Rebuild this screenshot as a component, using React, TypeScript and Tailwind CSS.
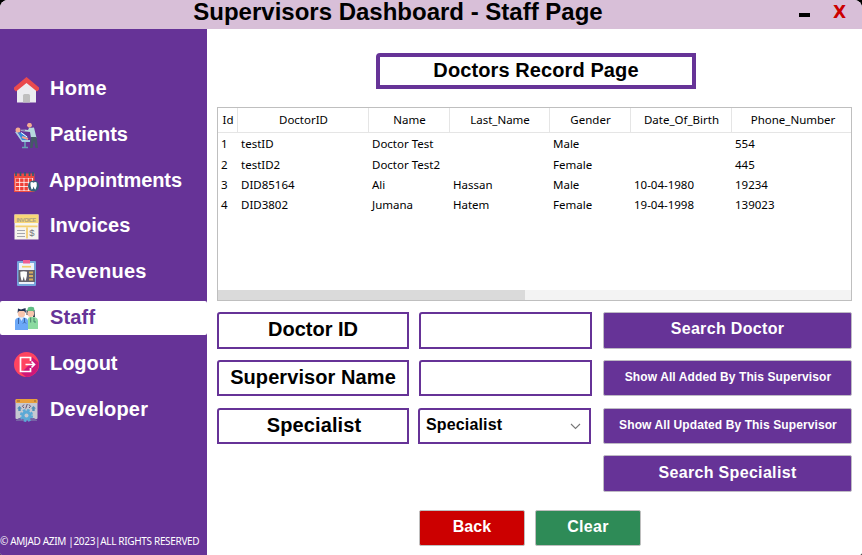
import React from "react";

const icons: Record<string, React.ReactNode> = {
  Home: (
    <>
      <path d="M3 10L12.5 3L22 10V25.5H3Z" fill="#ececf0" />
      <path d="M9 25.5V18.5Q9 17 10.5 17H14.5Q16 17 16 18.5V25.5Z" fill="#bfbfbf" />
      <path d="M12.5 0L25 10.5V12.5L23 14.5L12.5 6L2 14.5L0 12.5V10.5Z" fill="#ea4a4d" />
    </>
  ),
  Patients: (
    <>
      <path d="M1 9L3 8.500L9 17H16V19H8Z" fill="#a6cce4" />
      <path d="M4 9L9 10L14 14L12 17H8Z" fill="#3687dc" />
      <path d="M7 9.500L13 14" stroke="#fff" strokeWidth="1" />
      <path d="M8 14L14 16" stroke="#f4a28d" strokeWidth="2" />
      <path d="M11 19V24M8 24.500H14" stroke="#68a0b4" strokeWidth="1.600" />
      <circle cx="4" cy="7" r="2.500" fill="#f5ad93" />
      <circle cx="15.500" cy="2.300" r="2.400" fill="#f5ad93" />
      <path d="M7 6L14 7L15 5L20 4.500L22.500 15H17L16 9L7 8Z" fill="#b6d9dd" />
      <path d="M6.500 6.500L11 7" stroke="#7a55a5" strokeWidth="1.500" />
      <path d="M17 14H22.500L24 25H21.500L20 17L18.500 25H16Z" fill="#445a67" />
    </>
  ),
  Appointments: (
    <>
      <rect x="0" y="4.500" width="20.500" height="18.500" fill="#ef4b40" />
      <path d="M2 3V7M6.500 3V7M11 3V7M15.500 3V7M19 3V7" stroke="#315c75" strokeWidth="1.700" />
      <rect x="1.500" y="9" width="17.500" height="13" fill="#fff" />
      {[1.8, 6.1, 10.4, 14.7].map((x) =>
        [9.4, 13.7, 18].map((y) => (
          <rect key={x + "-" + y} x={x} y={y} width="3.500" height="3.500" fill="#ee4037" />
        )),
      )}
      <circle cx="19.500" cy="17" r="5.500" fill="#336078" />
      <path d="M16.500 13.500Q18 12.500 19.500 13.700Q21 12.500 22.700 13.500Q23.400 16 21.500 20.500Q20.300 20.500 19.600 17.500Q19 20.500 17.600 20.500Q16 16 16.500 13.500Z" fill="#fff" />
    </>
  ),
  Invoices: (
    <>
      <rect x=".5" y=".5" width="24" height="25" fill="#f6f4ee" />
      <rect x=".5" y=".5" width="24" height="8.500" fill="#f9d778" />
      <path d="M1.500 12.300H23.500M13 13.500V24.500" stroke="#f5cf6f" strokeWidth="1.800" />
      <path d="M3 16.500H11M3 19.500H11M3 22.500H11" stroke="#a5a7ae" strokeWidth="1" />
      <text x="2.600" y="7.500" fontSize="5.500" textLength="19.500" fontFamily="Liberation Sans" fontWeight="700" fill="#a9a083">INVOICE</text>
      <text x="15.200" y="22.200" fontSize="9.500" fontFamily="Liberation Sans" fontWeight="400" fill="#72757b">$</text>
    </>
  ),
  Revenues: (
    <>
      <rect x="3" y="1" width="19" height="25" rx="1" fill="#75a5dc" />
      <rect x="5" y="3" width="15" height="21" fill="#eef2fa" />
      <path d="M9 0H16V3.500H9Z" fill="#ef5e93" />
      <path d="M8 6.700H17" stroke="#f3cc67" strokeWidth="1.700" />
      <rect x="4.500" y="10" width="16.500" height="12" fill="#65616c" />
      <path d="M6.300 11.800Q9.700 10.500 13 11.800Q13.300 16 11.800 20.500H10.700L9.800 16.500L8.700 20.500H7.500Q6 15 6.300 11.800Z" fill="#fff" />
      <path d="M15 12.500H19M15 16H19M15 19.500H19" stroke="#d7ac60" strokeWidth="1.800" />
    </>
  ),
  Staff: (
    <>
      <path d="M1 24V15Q1 12 5 11.500H10Q14 12 14 15V24Z" fill="#6ba8f7" />
      <path d="M14 23V13Q14 11.500 16 11H20Q24 11.500 24 15V23Z" fill="#8bdaa0" />
      <circle cx="7.500" cy="7.700" r="3.700" fill="#f8c6ae" />
      <path d="M3.500 7L4 2.500L7 3.500L11.500 2L12 7L10 5L5 5Z" fill="#223253" />
      <path d="M5.500 11.500L7.500 15L9.500 11.500Z" fill="#e5efff" />
      <path d="M4.500 12V18M10.500 12V16L9 17.500M10.500 16L12 17.500" fill="none" stroke="#345c9c" strokeWidth=".9" />
      <path d="M12.500 4H20.500L21 11H19V6H14V9H12.500Z" fill="#374152" />
      <circle cx="16.700" cy="7.500" r="3.400" fill="#f8c6ae" />
      <path d="M13 5L14 1.500Q17 .2 20 1.500L20.500 5Z" fill="#60bd83" />
      <path d="M16.700 11.500V16.500M20 12V16H22" fill="none" stroke="#407c68" strokeWidth=".9" />
    </>
  ),
  Logout: (
    <>
      <circle cx="12.500" cy="12.500" r="12.500" fill="#ff4460" />
      <path d="M8 20L16 12L18 5L24.500 10.500A12.500 12.500 0 0 1 12 25L6 20Z" fill="#cf1779" />
      <path d="M16.500 9V5.500H6.500V19.500H16.500V16" fill="none" stroke="#fff" strokeWidth="1.700" />
      <path d="M11.500 12.500H20M17.500 9.500L20.500 12.500L17.500 15.500" fill="none" stroke="#fff" strokeWidth="1.700" />
    </>
  ),
  Developer: (
    <>
      <rect x="1.500" y="1.500" width="22" height="19.500" rx="1" fill="#c6c8d1" />
      <rect x="1.500" y="1" width="22" height="4" rx="1" fill="#e9a03c" />
      <path d="M3 3H6M20 3H22" stroke="#8e6238" strokeWidth="1" />
      <path d="M10 6.500L8.500 8.300L10 10M15 6.500L16.500 8.300L15 10M13.300 6L11.700 10.500" fill="none" stroke="#66516f" strokeWidth="1" />
      <path d="M3 10.500L5.500 8L8 10.500H6.700V13H4.300V10.500ZM17 10.500L19.500 8L22 10.500H20.700V13H18.300V10.500Z" fill="#508eb7" />
      <path d="M2 22L5 20H20L23 22V23H2Z" fill="#7762a5" />
      <circle cx="12.500" cy="17.500" r="5" fill="#5ba9d6" />
      <circle cx="12.500" cy="17.500" r="5.600" fill="none" stroke="#5ba9d6" strokeWidth="2" strokeDasharray="2.600 1.800" />
      <circle cx="12.500" cy="17.500" r="2" fill="#c6c8d1" />
    </>
  ),
};

const navItems = [
  { name: "Home", spacing: "tracking-[0.350px]" },
  { name: "Patients", spacing: "tracking-[0.020px]" },
  { name: "Appointments", spacing: "tracking-[-0.130px] -ml-px" },
  { name: "Invoices", spacing: "tracking-[0.030px]" },
  { name: "Revenues", spacing: "tracking-[0.280px]" },
  { name: "Staff", spacing: "tracking-[0.150px]" },
  { name: "Logout", spacing: "tracking-[-0.050px]" },
  { name: "Developer", spacing: "tracking-[0.150px]" },
];

const headers = ["Id", "DoctorID", "Name", "Last_Name", "Gender", "Date_Of_Birth", "Phone_Number"];

const records = [
  ["1", "testID", "Doctor Test", "", "Male", "", "554"],
  ["2", "testID2", "Doctor Test2", "", "Female", "", "445"],
  ["3", "DID85164", "Ali", "Hassan", "Male", "10-04-1980", "19234"],
  ["4", "DID3802", "Jumana", "Hatem", "Female", "19-04-1998", "139023"],
];

const columns = "grid grid-cols-[20px_131px_81px_100px_81px_101px_119px]";

function Sidebar() {
  return (
    <aside className="flex w-[207px] shrink-0 flex-col bg-[#663397] pt-[43px]">
      <nav className="flex flex-col gap-[11.800px]">
        {navItems.map(({ name, spacing }) => (
          <a
            key={name}
            className={
              "flex h-[34px] items-center rounded-[2px] pl-[14px] text-[20px] leading-none font-bold " +
              (name === "Staff" ? "bg-white text-[#663397]" : "text-white")
            }
          >
            <svg className="mt-[2px] mr-[11px] h-[26px] w-[25px] shrink-0" viewBox="0 0 25 26">
              {icons[name]}
            </svg>
            <span className={"-mt-[2px] " + spacing}>{name}</span>
          </a>
        ))}
      </nav>
      <footer className="mt-auto mb-[7px] font-['Noto_Sans',sans-serif] text-[10px] leading-[14px] font-normal tracking-[-0.330px] whitespace-nowrap text-white">
        © AMJAD AZIM |2023|ALL RIGHTS RESERVED
      </footer>
    </aside>
  );
}

function RecordTable() {
  return (
    <section className="mt-[18px] flex h-[194px] w-[635px] flex-col border border-[#bfbfbf] font-['Noto_Sans',sans-serif] text-[11.500px] font-normal text-black">
      <div className={columns + " h-[25px] border-b border-[#e5e5e5]"}>
        {headers.map((h, i) => (
          <div
            key={h}
            className={
              "flex items-center justify-center " + (i < 6 ? "border-r border-[#e5e5e5] pl-px" : "pl-[3px]")
            }
          >
            {h}
          </div>
        ))}
      </div>
      <div className="flex flex-col pt-[1px]">
        {records.map((row) => (
          <div key={row[0]} className={columns + " h-[20.300px] items-center"}>
            {row.map((cell, i) => (
              <div key={i} className="pl-[3px] leading-none whitespace-nowrap">
                {cell}
              </div>
            ))}
          </div>
        ))}
      </div>
      <div className="mt-auto h-[10px] bg-[#f3f3f3]">
        <div className="h-full w-[307px] bg-[#dadada]" />
      </div>
    </section>
  );
}

function Label({ children, spacing = "" }: { children: React.ReactNode; spacing?: string }) {
  return (
    <div
      className={
        "flex items-center justify-center rounded-tl-[3px] border-2 border-[#663397] pb-[3px] text-[20px] leading-none " +
        spacing
      }
    >
      {children}
    </div>
  );
}

function Action({ children, small, place = "" }: { children: React.ReactNode; small?: boolean; place?: string }) {
  return (
    <button
      className={
        "ml-px rounded-[2px] border border-[#bebac4] bg-[#663397] leading-none font-bold text-white " +
        (small ? "pb-[2px] pl-px text-[12px] tracking-[0.100px] " : "text-[16px] tracking-[0.330px] ") +
        place
      }
    >
      {children}
    </button>
  );
}

export default function App() {
  return (
    <div className="h-[555px] w-[862px] overflow-hidden bg-black font-['Liberation_Sans',Arial,sans-serif] font-bold text-black">
      <div className="flex h-full flex-col overflow-hidden rounded-t-[8px] rounded-b-[2px] bg-white">
        <header className="grid h-[29px] shrink-0 grid-cols-[796px_66px] bg-[#d8bfd8]">
          <h1 className="text-center text-[24px] leading-[24px]">Supervisors Dashboard - Staff Page</h1>
          <div className="flex items-center">
            <span className="ml-[3px] h-[4px] w-[11px] bg-black" />
            <span className="-mt-[5px] ml-[23px] font-['DejaVu_Sans',sans-serif] text-[17px] leading-none text-[#c00]">
              X
            </span>
          </div>
        </header>
        <div className="flex min-h-0 flex-1">
          <Sidebar />
          <main className="flex w-[655px] flex-col pl-[10px]">
            <div className="mt-[24px] ml-[159px] flex h-[36px] w-[320px] shrink-0 items-center justify-center rounded-tl-[4px] border-4 border-[#663397] pb-[2px] text-[20px] leading-none tracking-[0.100px]">
              Doctors Record Page
            </div>
            <RecordTable />
            <section className="mt-[11px] grid grid-cols-[192px_173px_250px] grid-rows-[37px_37px_36px_37px] gap-x-[10px] gap-y-[11px]">
              <Label>Doctor ID</Label>
              <input className="rounded-tl-[3px] border-2 border-[#663397]" />
              <Action place="pb-[4px]">Search Doctor</Action>
              <Label spacing="mb-px tracking-[0.080px]">Supervisor Name</Label>
              <input className="mb-px rounded-tl-[3px] border-2 border-[#663397]" />
              <Action small place="mb-px">
                Show All Added By This Supervisor
              </Action>
              <Label spacing="pl-[2px] tracking-[0.100px]">Specialist</Label>
              <div className="mr-px -ml-px flex items-center justify-between rounded-tl-[3px] border-2 border-[#663397] pr-[8px] pl-[6px]">
                <span className="-mt-[3px] text-[16px] leading-none tracking-[0.150px]">Specialist</span>
                <svg className="mt-[1px]" width="11" height="7" viewBox="0 0 11 7" fill="none">
                  <path d="M1 1L5.500 5.500L10 1" stroke="#777" strokeWidth="1.100" />
                </svg>
              </div>
              <Action small>Show All Updated By This Supervisor</Action>
              <Action place="col-start-3 pb-[2px]">Search Specialist</Action>
            </section>
            <div className="mt-[18px] ml-[202px] flex gap-[10px]">
              <button className="h-[36px] w-[106px] rounded-[2px] border border-[#bebebe] bg-[#c00] pb-[3px] text-[16px] leading-none tracking-[0.100px] text-white">
                Back
              </button>
              <button className="h-[36px] w-[106px] rounded-[2px] border border-[#bebebe] bg-[#2e8b57] pb-[3px] text-[16px] leading-none tracking-[0.300px] text-white">
                Clear
              </button>
            </div>
          </main>
        </div>
      </div>
    </div>
  );
}
